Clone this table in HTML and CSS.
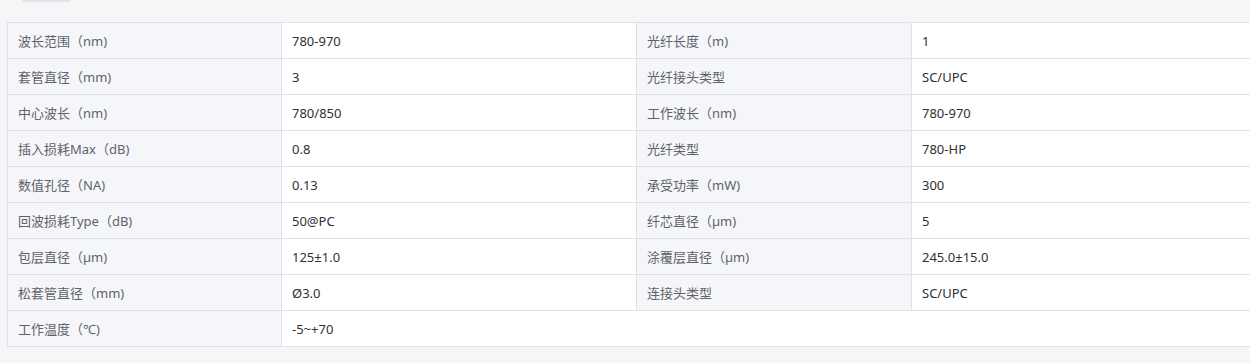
FILE: index.html
```html
<!DOCTYPE html>
<html lang="zh-CN">
<head>
<meta charset="utf-8">
<title>参数</title>
<link rel="stylesheet" href="styles.css">
</head>
<body>
<div class="page">
  <div class="tab-stub"></div>
  <table class="spec">
    <colgroup>
      <col class="c-label"><col class="c-value"><col class="c-label2"><col class="c-value2">
    </colgroup>
    <tbody>
      <tr><td class="label">波长范围（nm)</td><td class="value">780-970</td><td class="label">光纤长度（m)</td><td class="value">1</td></tr>
      <tr><td class="label">套管直径（mm)</td><td class="value">3</td><td class="label">光纤接头类型</td><td class="value">SC/UPC</td></tr>
      <tr><td class="label">中心波长（nm)</td><td class="value">780/850</td><td class="label">工作波长（nm)</td><td class="value">780-970</td></tr>
      <tr><td class="label">插入损耗Max（dB)</td><td class="value">0.8</td><td class="label">光纤类型</td><td class="value">780-HP</td></tr>
      <tr><td class="label">数值孔径（NA)</td><td class="value">0.13</td><td class="label">承受功率（mW)</td><td class="value">300</td></tr>
      <tr><td class="label">回波损耗Type（dB)</td><td class="value">50@PC</td><td class="label">纤芯直径（µm)</td><td class="value">5</td></tr>
      <tr><td class="label">包层直径（µm)</td><td class="value">125±1.0</td><td class="label">涂覆层直径（µm)</td><td class="value">245.0±15.0</td></tr>
      <tr><td class="label">松套管直径（mm)</td><td class="value">Ø3.0</td><td class="label">连接头类型</td><td class="value">SC/UPC</td></tr>
      <tr><td class="label">工作温度（℃)</td><td class="value" colspan="3">-5~+70</td></tr>
    </tbody>
  </table>
</div>
</body>
</html>
```
FILE: styles.css
```css
html, body {
  margin: 0;
  padding: 0;
  background: #f5f6f8;
  overflow: hidden;
}
.page {
  padding: 0 0 0 7px;
  width: 1300px;
  font-family: "Noto Sans", "Noto Sans CJK SC", sans-serif;
  font-size: 13px;
}
.tab-stub {
  margin-left: 15px;
  width: 48px;
  height: 2px;
  background: #e2e4e8;
  border-radius: 0 0 4px 4px;
  margin-bottom: 20px;
}
.spec {
  border-collapse: collapse;
  table-layout: fixed;
  width: 1260px;
}
.c-label { width: 274px; }
.c-value { width: 355px; }
.c-label2 { width: 275px; }
.c-value2 { width: 356px; }
.spec td {
  border: 1px solid #e0e2e6;
  height: 35px;
  padding: 0 10px;
  box-sizing: border-box;
  line-height: 20px;
  vertical-align: middle;
  white-space: nowrap;
}
.spec tr { height: 36px; }
.label {
  background: #f5f6f9;
  color: #60626a;
}
.value {
  background: #ffffff;
  color: #303133;
}
```
